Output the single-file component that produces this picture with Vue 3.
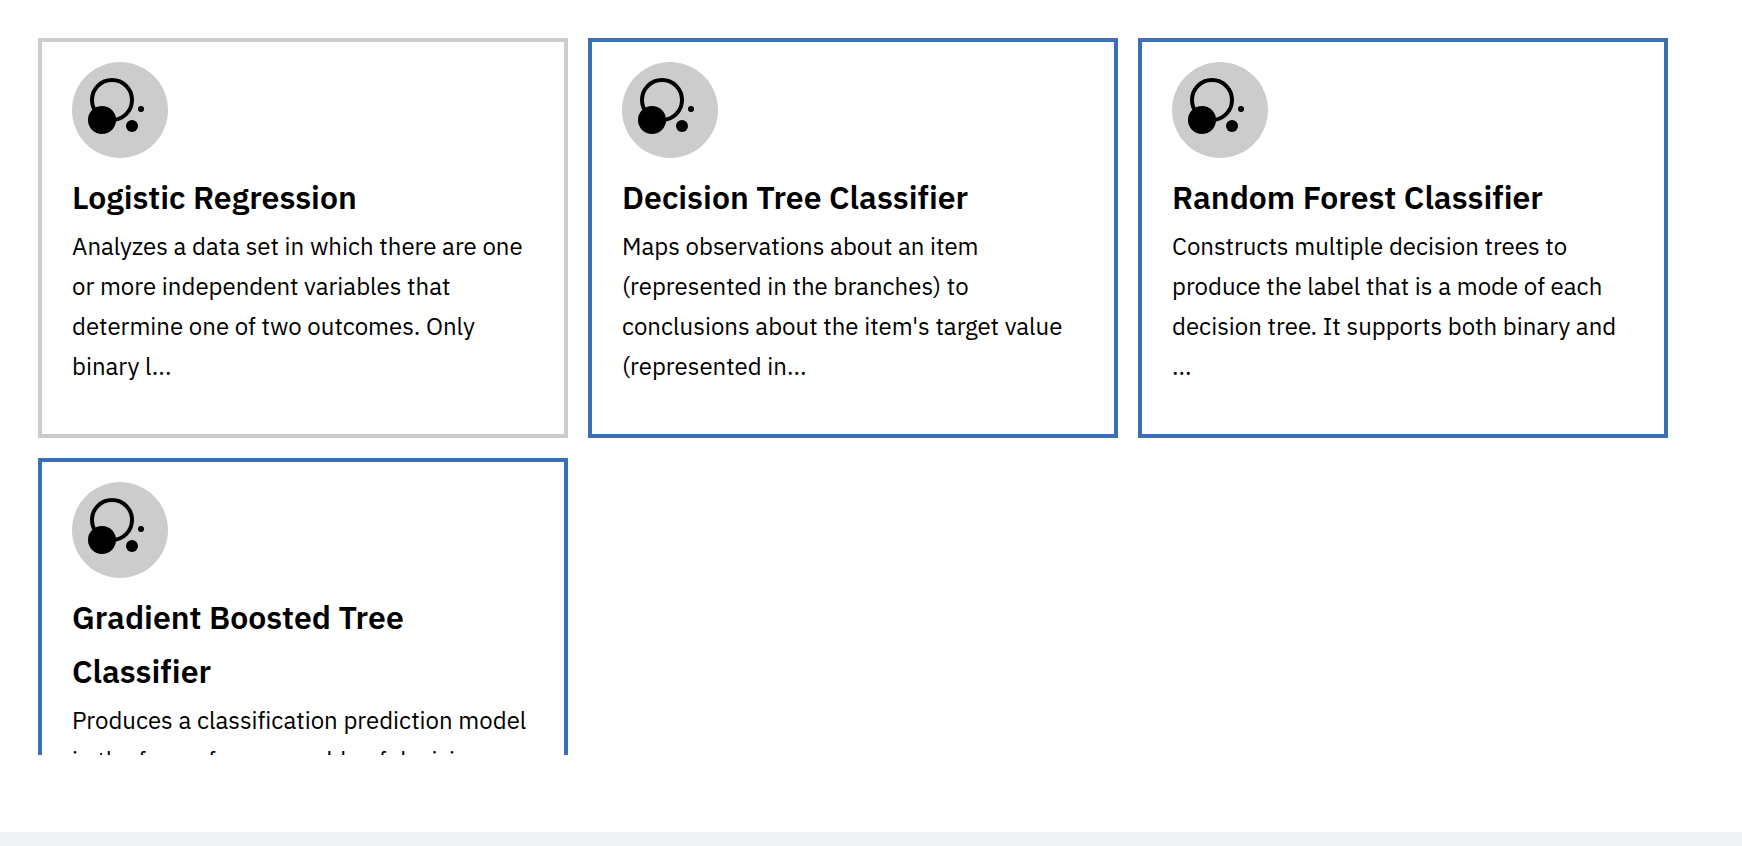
<script setup>
const estimators = [
  {
    name: 'Logistic Regression',
    description:
      'Analyzes a data set in which there are one\nor more independent variables that\ndetermine one of two outcomes. Only\nbinary l...',
    muted: true,
  },
  {
    name: 'Decision Tree Classifier',
    description:
      "Maps observations about an item\n(represented in the branches) to\nconclusions about the item's target value\n(represented in...",
    muted: false,
  },
  {
    name: 'Random Forest Classifier',
    description:
      'Constructs multiple decision trees to\nproduce the label that is a mode of each\ndecision tree. It supports both binary and\n...',
    muted: false,
  },
  {
    name: 'Gradient Boosted Tree Classifier',
    description:
      'Produces a classification prediction model\nin the form of an ensemble of decision',
    muted: false,
  },
]
</script>

<template>
  <div class="page">
    <main class="panel">
      <div class="cards">
        <article
          v-for="item in estimators"
          :key="item.name"
          class="card"
          :class="{ muted: item.muted }"
        >
          <svg class="icon" viewBox="0 0 96 96" aria-hidden="true">
            <circle cx="48" cy="48" r="48" fill="#cccccc" />
            <circle cx="40" cy="38" r="20" fill="none" stroke="#000" stroke-width="4" />
            <circle cx="30" cy="58" r="14" />
            <circle cx="60" cy="64" r="6" />
            <circle cx="69" cy="47" r="3" />
          </svg>
          <h2 class="title">{{ item.name }}</h2>
          <p class="description">{{ item.description }}</p>
        </article>
      </div>
    </main>
  </div>
</template>

<style>
body {
  margin: 0;
  background: #eff3f6;
}
</style>

<style scoped>
.page {
  box-sizing: border-box;
  height: 100vh;
  padding-bottom: 14px;
  color: #000;
  font-family: "IBM Plex Sans", Roboto, sans-serif;
  font-variant-ligatures: none;
}

.panel {
  box-sizing: border-box;
  height: 100%;
  padding: 38px 74px 77px 38px;
  background: #fff;
}

.cards {
  display: grid;
  grid-template-columns: repeat(3, minmax(0, 1fr));
  grid-auto-rows: minmax(400px, auto);
  align-content: start;
  gap: 20px;
  height: 100%;
  overflow: hidden;
}

.card {
  box-sizing: border-box;
  padding: 20px 30px;
  border: 4px solid #3d70b2;
}

.card.muted {
  border-color: #cccccc;
}

.icon {
  display: block;
  width: 96px;
  height: 96px;
}

.title {
  margin: 12px 0 0;
  font-size: 32px;
  font-weight: 600;
  line-height: 54px;
}

.description {
  margin: 2px 0 0;
  font-size: 24px;
  line-height: 40px;
  white-space: pre-line;
}
</style>
